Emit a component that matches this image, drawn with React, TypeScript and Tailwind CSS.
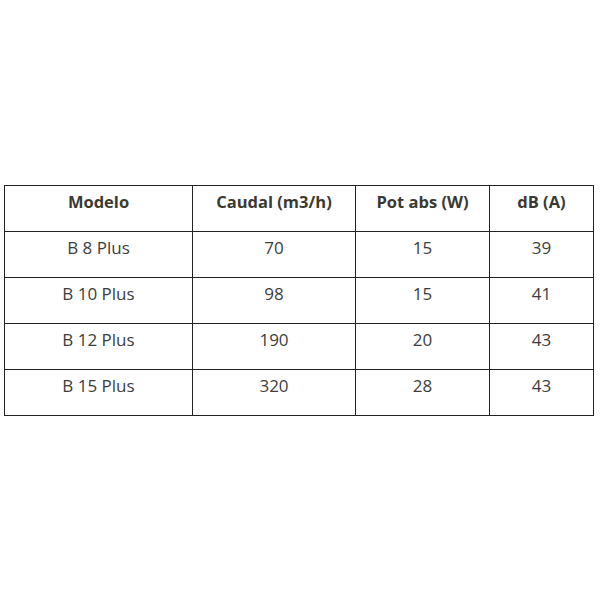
import React from 'react';

const rows = [
  { modelo: 'B 8 Plus', caudal: '70', pot: '15', db: '39' },
  { modelo: 'B 10 Plus', caudal: '98', pot: '15', db: '41' },
  { modelo: 'B 12 Plus', caudal: '190', pot: '20', db: '43' },
  { modelo: 'B 15 Plus', caudal: '320', pot: '28', db: '43' },
];

export default function App() {
  return (
    <div className="w-[600px] h-[600px] bg-white pt-[185px] pl-[4px]" style={{ fontFamily: '"Open Sans", "Liberation Sans", sans-serif' }}>
      <table className="border-collapse table-fixed w-[589px] text-[17px] text-[#3d3d3d]">
        <colgroup>
          <col className="w-[188px]" />
          <col className="w-[163px]" />
          <col className="w-[134px]" />
          <col className="w-[104px]" />
        </colgroup>
        <thead>
          <tr className="h-[46px]">
            {['Modelo', 'Caudal (m3/h)', 'Pot abs (W)', 'dB (A)'].map((h) => (
              <th key={h} className="border border-[#222] align-top pt-[4px] font-bold text-[16.5px] text-[#3b3a32] text-center">
                {h}
              </th>
            ))}
          </tr>
        </thead>
        <tbody>
          {rows.map((r) => (
            <tr key={r.modelo} className="h-[46px]">
              <td className="border border-[#222] align-top pt-[3px] text-center">{r.modelo}</td>
              <td className="border border-[#222] align-top pt-[3px] text-center">{r.caudal}</td>
              <td className="border border-[#222] align-top pt-[3px] text-center">{r.pot}</td>
              <td className="border border-[#222] align-top pt-[3px] text-center">{r.db}</td>
            </tr>
          ))}
        </tbody>
      </table>
    </div>
  );
}
